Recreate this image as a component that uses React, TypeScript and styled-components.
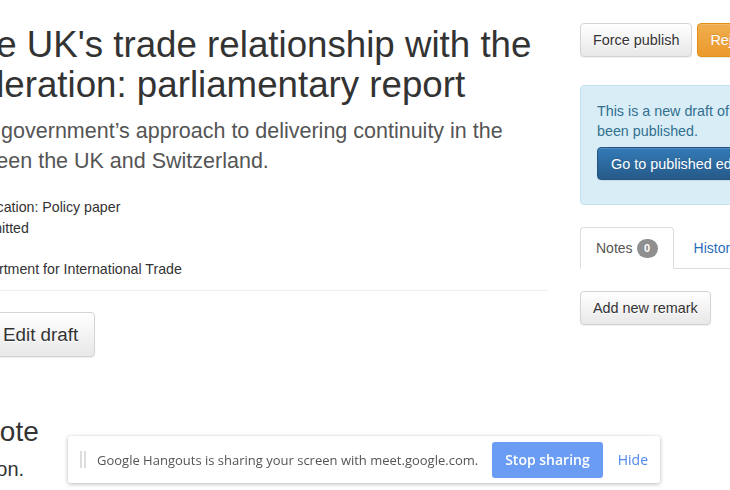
import React from 'react';
import styled, { createGlobalStyle } from 'styled-components';

const Global = createGlobalStyle`
  html, body { margin: 0; padding: 0; background: #fff; overflow: hidden; }
  body {
    font-family: "Liberation Sans", Arial, Helvetica, sans-serif;
    color: #333;
    width: 730px;
    height: 490px;
  }
  * { box-sizing: border-box; }
`;

const Page = styled.div`
  display: flex;
  align-items: flex-start;
  gap: 32px;
  margin-left: -220px;
  width: 1140px;
`;

const Main = styled.main`
  flex: none;
  width: 768px;
`;

const Side = styled.aside`
  flex: none;
  width: 320px;
  padding-top: 23px;
`;

const Title = styled.h1`
  margin: 25px 0 0;
  font-size: 36.7px;
  line-height: 40px;
  font-weight: 400;
  color: #333;
`;

const Lead = styled.p`
  margin: 11px 0 0;
  font-size: 21.5px;
  line-height: 30px;
  color: #555;
`;

const Meta = styled.dl`
  margin: 21px 0 0;
  display: grid;
  grid-template-columns: 185px 1fr;
  font-size: 14.2px;
  line-height: 20.5px;
`;

const MetaKey = styled.dt`
  margin: 0;
  font-weight: 700;
`;

const MetaValue = styled.dd`
  margin: 0;
`;

const Rule = styled.hr`
  margin: 11px 0 0;
  border: 0;
  border-top: 1px solid #eee;
`;

const ActionRow = styled.div`
  display: flex;
  gap: 8px;
  margin-top: 21px;
  padding-left: 206px;
`;

const Button = styled.button<{ $variant?: 'default' | 'warning' | 'primary'; $size?: 'md' | 'lg' }>`
  font-family: inherit;
  display: inline-flex;
  align-items: center;
  white-space: nowrap;
  border-radius: 4px;
  cursor: pointer;
  height: ${p => (p.$size === 'lg' ? '45px' : '34px')};
  padding: ${p => (p.$size === 'lg' ? '0 16px' : '0 12px')};
  font-size: ${p => (p.$size === 'lg' ? '18.8px' : '14.4px')};
  ${p =>
    p.$variant === 'warning'
      ? `color:#fff;border:1px solid #e38d13;background:linear-gradient(#f0ad4e,#eb9a2c);text-shadow:0 -1px 0 rgba(0,0,0,.1);`
      : p.$variant === 'primary'
      ? `color:#fff;border:1px solid #245580;background:linear-gradient(#337ab7,#265a88);text-shadow:0 -1px 0 rgba(0,0,0,.15);font-size:14.4px;height:33px;padding:0 13px;`
      : `color:#333;border:1px solid #d4d4d4;background:linear-gradient(#fff,#e8e8e8);text-shadow:0 1px 0 #fff;`}
  box-shadow: inset 0 1px 0 rgba(255,255,255,.15), 0 1px 1px rgba(0,0,0,.075);
`;

const NoteSection = styled.section`
  padding-left: 114px;
  margin-top: 58px;
`;

const NoteHeading = styled.h2`
  margin: 0;
  font-size: 28px;
  line-height: 34px;
  font-weight: 400;
  color: #333;
`;

const NoteText = styled.p`
  margin: 6px 0 0;
  font-size: 20px;
  line-height: 28px;
  color: #333;
`;

const ButtonBar = styled.div`
  display: flex;
  gap: 5px;
`;

const Alert = styled.div`
  margin-top: 28px;
  padding: 15px 16px 24px;
  background: #d9edf7;
  border: 1px solid #c4e3f1;
  border-radius: 4px;
  color: #31708f;
  font-size: 14.3px;
  line-height: 20px;
`;

const AlertText = styled.p`
  margin: 0 0 6px;
`;

const Tabs = styled.ul`
  list-style: none;
  margin: 22px 0 0;
  padding: 0;
  display: flex;
  gap: 4px;
  border-bottom: 1px solid #ddd;
`;

const Tab = styled.li<{ $active?: boolean }>`
  display: flex;
  align-items: center;
  gap: 4px;
  padding: 0 15px;
  height: 42px;
  margin-bottom: -1px;
  font-size: 14px;
  border: 1px solid ${p => (p.$active ? '#ddd' : 'transparent')};
  border-bottom-color: ${p => (p.$active ? '#fff' : 'transparent')};
  border-radius: 4px 4px 0 0;
  background: ${p => (p.$active ? '#fff' : 'transparent')};
  color: ${p => (p.$active ? '#555' : '#2a6ebb')};
`;

const Badge = styled.span`
  display: inline-flex;
  align-items: center;
  justify-content: center;
  min-width: 21px;
  height: 19px;
  padding: 0 6px;
  border-radius: 10px;
  background: #8f8f8f;
  color: #fff;
  font-size: 11px;
  font-weight: 700;
`;

const RemarkRow = styled.div`
  margin-top: 22px;
`;

const ShareBar = styled.div`
  position: fixed;
  left: 68px;
  top: 436px;
  width: 592px;
  height: 47px;
  display: flex;
  align-items: center;
  padding: 0 12px;
  background: #fff;
  border-radius: 2px;
  box-shadow: 0 1px 4px rgba(0,0,0,.28), 0 0 1px rgba(0,0,0,.12);
  font-family: "Open Sans", "Noto Sans", sans-serif;
`;

const Grip = styled.span`
  width: 6px;
  height: 17px;
  border-left: 2px solid #ddd;
  border-right: 2px solid #ddd;
  margin-right: 11px;
  flex: none;
`;

const ShareText = styled.span`
  font-size: 13px;
  color: #555;
  flex: none;
  white-space: nowrap;
`;

const StopButton = styled.button`
  font-family: inherit;
  height: 36px;
  width: 115px;
  border: 0;
  border-radius: 3px;
  background: #6b9cf4;
  color: #fff;
  font-weight: 600;
  font-size: 14px;
  margin-left: 14px;
  margin-right: 15px;
`;

const HideLink = styled.a`
  font-size: 14px;
  color: #4d86ec;
  text-decoration: none;
`;

export default function App() {
  return (
    <>
      <Global />
      <Page>
        <Main>
          <Title>Continuing the UK's trade relationship with the Swiss Confederation: parliamentary report</Title>
          <Lead>
            The paper sets out the government’s approach to delivering continuity in the trade relationship
            between the UK and Switzerland.
          </Lead>
          <Meta>
            <MetaKey>Type:</MetaKey>
            <MetaValue>Publication: Policy paper</MetaValue>
            <MetaKey>State:</MetaKey>
            <MetaValue>Submitted</MetaValue>
            <MetaKey>Access:</MetaKey>
            <MetaValue>&nbsp;</MetaValue>
            <MetaKey>Organisations:</MetaKey>
            <MetaValue>Department for International Trade</MetaValue>
          </Meta>
          <Rule />
          <ActionRow>
            <Button $size="lg">Edit draft</Button>
          </ActionRow>
          <NoteSection>
            <NoteHeading>Author note</NoteHeading>
            <NoteText>No discussion.</NoteText>
          </NoteSection>
        </Main>
        <Side>
          <ButtonBar>
            <Button>Force publish</Button>
            <Button $variant="warning">Reject</Button>
          </ButtonBar>
          <Alert>
            <AlertText>This is a new draft of a document that has been published.</AlertText>
            <Button $variant="primary">Go to published edition</Button>
          </Alert>
          <Tabs>
            <Tab $active>
              Notes <Badge>0</Badge>
            </Tab>
            <Tab>History</Tab>
          </Tabs>
          <RemarkRow>
            <Button>Add new remark</Button>
          </RemarkRow>
        </Side>
      </Page>
      <ShareBar>
        <Grip />
        <ShareText>Google Hangouts is sharing your screen with meet.google.com.</ShareText>
        <StopButton>Stop sharing</StopButton>
        <HideLink href="#">Hide</HideLink>
      </ShareBar>
    </>
  );
}
